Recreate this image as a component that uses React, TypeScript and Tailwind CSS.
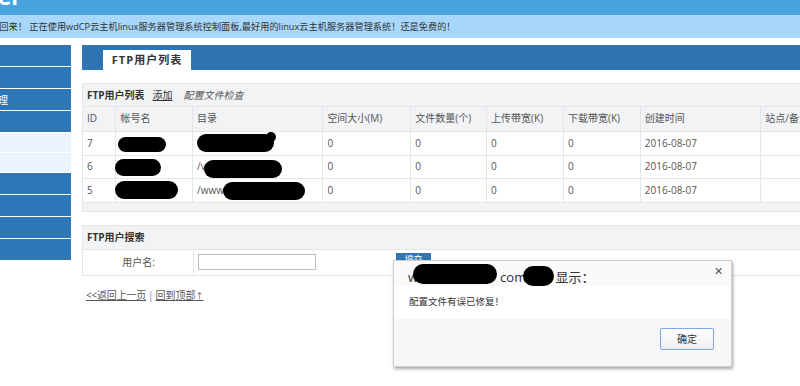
import React from "react";

const FONT = "font-['Open_Sans','Noto_Sans_CJK_SC',sans-serif]";

type Row = {
  id: string;
  nameW: number;
  nameH: number;
  nameTop: number;
  nameLeft: number;
  dirPrefix: string;
  dirW: number;
  dirLeft: number;
  dirTop: number;
};

const rows: Row[] = [
  { id: "7", nameW: 48, nameH: 15, nameTop: 5, nameLeft: 2, dirPrefix: "", dirW: 77, dirLeft: 4, dirTop: 2 },
  { id: "6", nameW: 46, nameH: 17, nameTop: 3, nameLeft: -1, dirPrefix: "/v", dirW: 78, dirLeft: 11, dirTop: 4 },
  { id: "5", nameW: 63, nameH: 18, nameTop: 2, nameLeft: -1, dirPrefix: "/www", dirW: 82, dirLeft: 30, dirTop: 3 },
];

const headers = [
  "ID",
  "帐号名",
  "目录",
  "空间大小(M)",
  "文件数量(个)",
  "上传带宽(K)",
  "下载带宽(K)",
  "创建时间",
  "站点/备注",
];

const colWidths = [33, 77, 131, 88, 76, 77, 77, 121, 100];

function Sidebar() {
  const items = [
    "blue",
    "blue",
    "blue-text",
    "blue",
    "light",
    "light",
    "blue",
    "blue",
    "blue",
    "blue",
  ];
  return (
    <div className="w-[71px] shrink-0 flex flex-col gap-[1px]">
      {items.map((kind, i) => (
        <div
          key={i}
          className={
            kind === "light"
              ? "h-[19px] bg-[#eaf4fe] overflow-hidden"
              : "h-[21px] bg-[#2f76b6] overflow-hidden flex items-center"
          }
        >
          {kind === "blue-text" && (
            <span className="text-[10px] leading-none text-white -ml-[12px] whitespace-nowrap">管理</span>
          )}
        </div>
      ))}
    </div>
  );
}

function Blob({ w, h, top, left }: { w: number; h: number; top: number; left: number }) {
  return (
    <span
      className="absolute bg-black rounded-full"
      style={{ width: w, height: h, top, left }}
    />
  );
}

function FtpTable() {
  return (
    <div className="w-[780px] border border-[#e3e6ea]">
      <div className="h-[23px] bg-[#f2f3f5] border-b border-[#e3e6ea] flex items-center px-[4px] gap-[8px] text-[10px] text-[#333]">
        <span className="font-bold">FTP用户列表</span>
        <span className="underline text-[#333]">添加</span>
        <span className="italic text-[#555] ml-[3px]">配置文件检查</span>
      </div>
      <table className="table-fixed border-collapse text-[10px] text-[#555]">
        <colgroup>
          {colWidths.map((w, i) => (
            <col key={i} style={{ width: w }} />
          ))}
        </colgroup>
        <thead>
          <tr className="h-[24px] bg-[#f2f3f5]">
            {headers.map((h) => (
              <th
                key={h}
                className="border-r border-b border-[#e3e6ea] text-left font-normal px-[4px] whitespace-nowrap overflow-hidden"
              >
                {h}
              </th>
            ))}
          </tr>
        </thead>
        <tbody>
          {rows.map((r, idx) => (
            <tr key={r.id} className={idx === 1 ? "h-[23px] bg-white" : "h-[24px] bg-white"}>
              <td className="border-r border-b border-[#e3e6ea] px-[4px]">{r.id}</td>
              <td className="border-r border-b border-[#e3e6ea] px-[4px] relative">
                <Blob w={r.nameW} h={r.nameH} top={r.nameTop} left={r.nameLeft} />
              </td>
              <td className="border-r border-b border-[#e3e6ea] px-[4px] relative">
                {r.dirPrefix}
                <Blob w={r.dirW} h={18} top={r.dirTop} left={r.dirLeft} />
                {idx === 0 && <Blob w={10} h={10} top={0} left={73} />}
                {idx === 2 && <Blob w={30} h={14} top={6} left={80} />}
              </td>
              <td className="border-r border-b border-[#e3e6ea] px-[4px]">0</td>
              <td className="border-r border-b border-[#e3e6ea] px-[4px]">0</td>
              <td className="border-r border-b border-[#e3e6ea] px-[4px]">0</td>
              <td className="border-r border-b border-[#e3e6ea] px-[4px]">0</td>
              <td className="border-r border-b border-[#e3e6ea] px-[4px]">2016-08-07</td>
              <td className="border-r border-b border-[#e3e6ea] px-[4px]"></td>
            </tr>
          ))}
        </tbody>
      </table>
      <div className="h-[8px] bg-[#f2f3f5]" />
    </div>
  );
}

function SearchPanel() {
  return (
    <div className="w-[780px] border-x border-t border-[#e3e6ea]">
      <div className="h-[24px] bg-[#f2f3f5] border-b border-[#e3e6ea] flex items-center px-[4px] text-[10px] font-bold text-[#333]">
        FTP用户搜索
      </div>
      <div className="h-[26px] flex border-b border-[#e3e6ea] text-[10px] text-[#555]">
        <div className="w-[111px] border-r border-[#e3e6ea] flex items-center justify-center pl-[1px]">
          用户名:
        </div>
        <div className="flex items-center pl-[4px]">
          <div className="w-[118px] h-[16px] border border-[#bcbcbc] bg-white" />
          <div className="ml-[80px] -mt-[4px] w-[35px] h-[14px] bg-[#2f76b6] text-white text-[9px] leading-[14px] text-center">
            提交
          </div>
        </div>
      </div>
    </div>
  );
}

function AlertDialog() {
  return (
    <div className="absolute left-[393px] top-[260px] w-[339px] h-[107px] bg-white border border-[#cfcfcf] shadow-[1px_2px_3px_rgba(0,0,0,0.35)] flex flex-col">
      <div className="h-[25px] bg-[#fafafa] relative flex items-end pl-[14px] text-[13px] leading-none text-[#333]">
        <span className="relative whitespace-nowrap pb-[2px]">
          <span className="text-[#333]">w</span>
          <span className="inline-block w-[82px]" />
          <span>com.</span>
          <span className="inline-block w-[26px]" />
          <span>显示：</span>
          <span className="absolute bg-black rounded-full left-[5px] top-[-7px] w-[84px] h-[20px]" />
          <span className="absolute bg-black rounded-full left-[115px] top-[-5px] w-[31px] h-[20px]" />
        </span>
        <span className="absolute right-[8px] top-[4px] text-[11px] text-[#555]">✕</span>
      </div>
      <div className="h-[33px] flex items-center pl-[15px] text-[9.5px] text-[#333]">
        配置文件有误已修复！
      </div>
      <div className="flex-1 bg-[#f7f7f7] flex justify-end pt-[9px] pr-[17px]">
        <div className="w-[54px] h-[22px] border border-[#7ba7e6] rounded-[2px] bg-gradient-to-b from-white to-[#eeeeee] flex items-center justify-center text-[10px] text-[#333]">
          确定
        </div>
      </div>
    </div>
  );
}

export default function App() {
  return (
    <div className={`relative w-[800px] h-[386px] overflow-hidden bg-white ${FONT}`}>
      {/* top bar */}
      <div className="h-[15px] bg-[#48a4df] overflow-hidden">
        <div className="text-[22px] leading-none font-bold text-white -mt-[15px] -ml-[3px]">CP</div>
      </div>
      {/* notice */}
      <div className="h-[23px] bg-[#a7d7fb] flex items-center overflow-hidden whitespace-nowrap text-[9.2px] text-[#333]">
        <span className="-ml-[19px]">欢迎回来！ 正在使用wdCP云主机linux服务器管理系统控制面板,最好用的linux云主机服务器管理系统！还是免费的！</span>
      </div>

      <div className="flex pt-[7px]">
        <Sidebar />
        <div className="ml-[11px] flex-1 min-w-0 overflow-hidden">
          {/* tab bar */}
          <div className="h-[25px] bg-[#2f74b3] flex items-end pl-[21px]">
            <div className="w-[88px] h-[20px] bg-white flex items-center justify-center text-[11px] font-bold tracking-[1px] text-[#333]">
              FTP用户列表
            </div>
          </div>

          <div className="mt-[13px]">
            <FtpTable />
          </div>

          <div className="mt-[13px]">
            <SearchPanel />
          </div>

          <div className="mt-[12px] pl-[4px] text-[10px] text-[#555] flex items-center">
            <span className="underline tracking-[-0.2px]">&lt;&lt;返回上一页</span>
            <span className="mx-[2px] text-[#8a6fb0]">|</span>
            <span className="underline">回到顶部<span className="text-[8px]">↑</span></span>
          </div>
        </div>
      </div>

      <AlertDialog />
    </div>
  );
}
